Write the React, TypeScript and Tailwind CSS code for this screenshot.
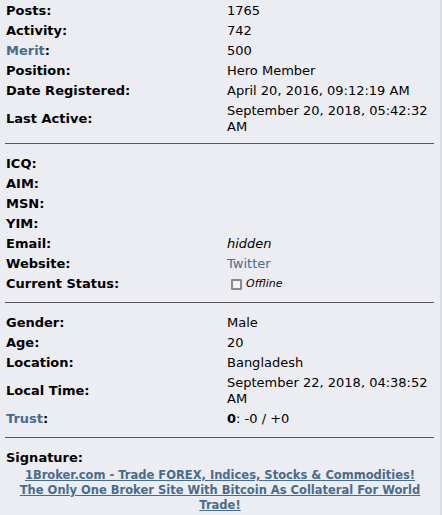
import React from "react";

type Row = { label: React.ReactNode; value?: React.ReactNode; tall?: boolean };

const link = "text-[#476C8E]";

function Rows({ rows }: { rows: Row[] }) {
  return (
    <div className="flex flex-col">
      {rows.map((r, i) => (
        <div key={i} className={`grid grid-cols-[227px_210px] items-center ${r.tall ? "h-[36px]" : "h-[20px]"}`}>
          <div className="pl-[6px] font-bold leading-[16px]">{r.label}</div>
          <div className="leading-[16px]">{r.value}</div>
        </div>
      ))}
    </div>
  );
}

function Hr({ className }: { className: string }) {
  return <div className={`mx-[5px] w-[429px] h-px bg-[#58585c] ${className}`} />;
}

export default function App() {
  return (
    <div className="w-[442px] h-[515px] overflow-hidden bg-[#ECEDF3] text-black text-[13px] font-['DejaVu_Sans','Verdana',sans-serif] border-r-2 border-r-[#dcdce4] pt-px">
      <Rows
        rows={[
          { label: "Posts:", value: "1765" },
          { label: "Activity:", value: "742" },
          { label: <><span className={link}>Merit</span>:</>, value: "500" },
          { label: "Position:", value: "Hero Member" },
          { label: "Date Registered:", value: "April 20, 2016, 09:12:19 AM" },
          { label: "Last Active:", value: "September 20, 2018, 05:42:32 AM", tall: true },
        ]}
      />
      <Hr className="mt-[6px] mb-[10px]" />
      <Rows
        rows={[
          { label: "ICQ:" },
          { label: "AIM:" },
          { label: "MSN:" },
          { label: "YIM:" },
          { label: "Email:", value: <i>hidden</i> },
          { label: "Website:", value: <span className={link}>Twitter</span> },
          {
            label: "Current Status:",
            value: (
              <span className="flex items-center pl-[4px] gap-[4px]">
                <span className="inline-block w-[11px] h-[11px] border-2 border-[#8a8a8a] bg-[#f4f4f4] rounded-[1px]" />
                <i className="text-[11px]">Offline</i>
              </span>
            ),
          },
        ]}
      />
      <Hr className="mt-[8px] mb-[10px]" />
      <Rows
        rows={[
          { label: "Gender:", value: "Male" },
          { label: "Age:", value: "20" },
          { label: "Location:", value: "Bangladesh" },
          { label: "Local Time:", value: "September 22, 2018, 04:38:52 AM", tall: true },
          { label: <><span className={link}>Trust</span>:</>, value: <><b>0</b>: -0 / +0</> },
        ]}
      />
      <Hr className="mt-[8px] mb-[10px]" />
      <div className="h-[20px] flex items-center pl-[6px] font-bold">Signature:</div>
      <div className="px-[5px] w-[440px] text-center text-[11.5px] font-bold leading-[15px]">
        <span className={`${link} underline`}>
          1Broker.com - Trade FOREX, Indices, Stocks &amp; Commodities!
          <br />
          The Only One Broker Site With Bitcoin As Collateral For World Trade!
        </span>
      </div>
    </div>
  );
}
